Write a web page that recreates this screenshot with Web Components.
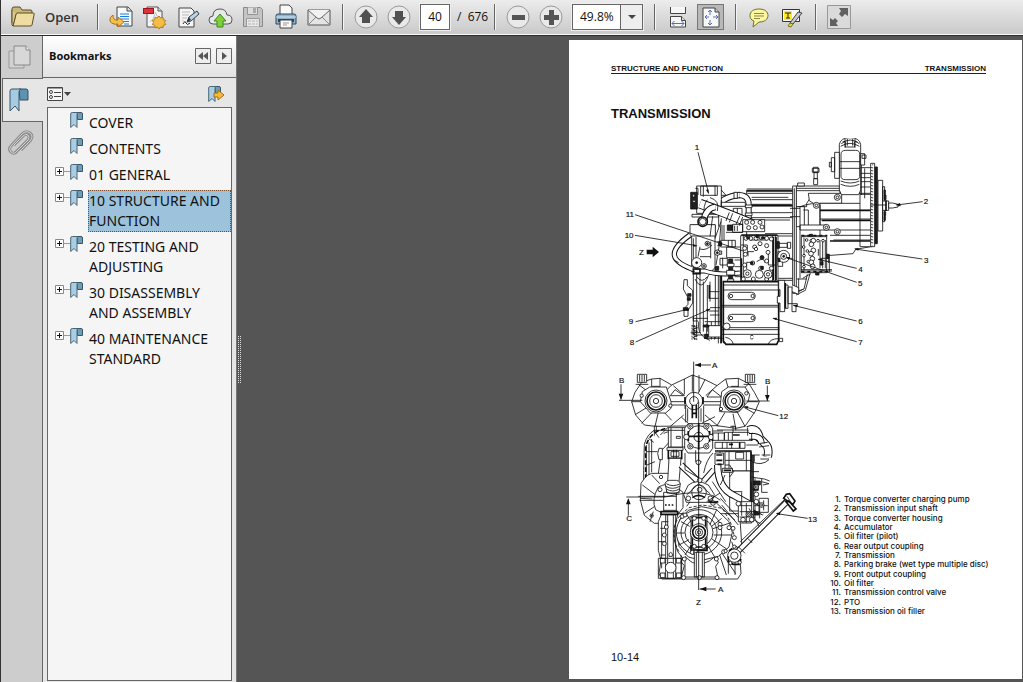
<!DOCTYPE html>
<html lang="en">
<head>
<meta charset="utf-8">
<title>Transmission manual</title>
<style>
html,body{margin:0;height:100%}
body{font-family:"Open Sans","Noto Sans",sans-serif;font-size:12px;color:#111;background:#555;overflow:hidden}
</style>
</head>
<body>
<pdf-reader></pdf-reader>
<script>
const define=(name,html,setup)=>customElements.define(name,class extends HTMLElement{
  connectedCallback(){
    if(this.shadowRoot)return;
    const t=document.createElement('template');
    t.innerHTML=typeof html==='function'?html(this):html;
    this.attachShadow({mode:'open'}).append(t.content.cloneNode(true));
    if(setup)setup(this);
  }
});

const mark=`<path d="M7 .5h4q1.500 0 1.500 1.500v5.500h-5z" fill="#6f9db6" stroke="#3a5666"/><path d="M.7 2Q.7.5 2.200.5H8q-1 .5-1 2v13l-3-3-3.300 3z" fill="#a9cde2" stroke="#4c6675"/>`;
const icons={
folder:`<path d="M1 18V4q0-2 2-2h6l2 3h9q1 0 1 2v3" fill="#c9b877" stroke="#5c4f2a"/><path d="M2 21 5 9q0-1 2-1h15q2 0 1 2l-2 10q0 1-2 1z" fill="#efdca0" stroke="#5c4f2a"/><path d="M1 5v15l1 1 3-12" fill="#dcca8c" stroke="#5c4f2a"/>`,
export:`<path d="M8 2h11l4 4v15H8z" fill="#f5f8fb" stroke="#444"/><path d="M18 2v4h5" fill="#ddd" stroke="#444"/><path d="M11 9h9M11 11.500h9M11 14h9M15 16.500h5M15 19h5" stroke="#1d7be0"/><path d="M4 10q-4 2-3 6 2 4 8 3v3l6-5-6-5v3q-5 1-5-5z" fill="#f6c14a" stroke="#a8741a"/>`,
create:`<path d="M5 2h11l4 4v16H5z" fill="#f4f4f4" stroke="#555"/><path d="M16 2v4h4" fill="#ddd" stroke="#555"/><path d="M13 7q2 6 6 6M13 9q-1 5-5 8" fill="none" stroke="#bbb"/><rect x="1.500" y="3.500" width="10" height="5" fill="#e0303a" stroke="#a3121c"/><path d="m17 11 1.600 2 2.400-.8.200 2.500 2.500.7-1.200 2.100 1.200 2-2.500.8-.2 2.500-2.400-.8-1.600 2-1.600-2-2.400.8-.2-2.500-2.500-.8 1.200-2-1.200-2.100 2.500-.7.200-2.500 2.400.8z" fill="#f4bd45" stroke="#b57d1c"/>`,
sign:`<path d="M4 3h12l3 3v16H4z" fill="#f4f4f4" stroke="#444"/><path d="M7 7h8M7 10h7M7 13h5M7 16h2" stroke="#bbb"/><path d="M8 19q2-4 3-1t4 0" fill="none" stroke="#222"/><path d="m12 17 2-5 8-6 2 3-8 7z" fill="#bcd3e2" stroke="#33434e"/><path d="m12 17 2-5 2 3z" fill="#333"/>`,
cloud:`<path d="M5 19Q1 19 1 15q0-4 4-4 0-7 7-7 6 0 7 6 5 0 5 5 0 4-4 4z" fill="#e9e9e9" stroke="#555"/><path d="m12 9 6 7h-3v6H9v-6H6z" fill="#7fd03c" stroke="#3d8a1c"/>`,
save:`<path d="M2.500 2.500h17l2 2v17h-19z" fill="#c4c4c4" stroke="#8b8b8b"/><path d="M6.500 2.500v7h10v-7" fill="#dcdcdc" stroke="#959595"/><path d="M12 3v5h3V3z" fill="#aaa"/><path d="M5.500 21.500v-8h13v8" fill="#e8e8e8" stroke="#999"/><path d="M7 16h10M7 19h10" stroke="#b5b5b5" stroke-dasharray="3 1"/>`,
print:`<path d="M6 11V0h9l3 3v8" fill="#f8f8f8" stroke="#444"/><path d="M2 19V11q0-2 2-2h16q2 0 2 2v8z" fill="#8db2cd" stroke="#31485a"/><path d="M2 12h20" stroke="#d7e6f0"/><path d="M4 14h16v3H4z" fill="#2c4152"/><path d="M6 15h12v8H6z" fill="#fafafa" stroke="#444"/><path d="M9 18h6M9 20h4" stroke="#999"/>`,
mail:`<path d="M1 5h22v15H1z" fill="#e4e4e4" stroke="#555"/><path d="m1 20 8-8M23 20l-8-8" stroke="#888" fill="none"/><path d="m1 5 9 8q2 2 4 0l9-8" fill="#f1f1f1" stroke="#666"/>`,
up:`<circle cx="12" cy="12" r="11" fill="#e9e9e9" stroke="#999"/><path d="m12 4 7 8h-3v6H8v-6H5z" fill="#505050"/>`,
down:`<circle cx="12" cy="12" r="11" fill="#e9e9e9" stroke="#999"/><path d="m12 20 7-8h-3V6H8v6H5z" fill="#505050"/>`,
minus:`<circle cx="12" cy="12" r="11" fill="#e9e9e9" stroke="#999"/><path d="M6 10h13v5H6z" fill="#555"/>`,
plus:`<circle cx="12" cy="12" r="11" fill="#e9e9e9" stroke="#999"/><path d="M10 5h5v5h5v5h-5v5h-5v-5H5v-5h5z" fill="#555"/>`,
fitwidth:`<path d="M4.500 2v6.500h15V2M4.500 22V11.500h11l4 4V22z" fill="#f6f6f6" stroke="#444"/><path d="M15.500 11.500v4h4" fill="#ddd" stroke="#444"/><path d="M6 18.500h12M8.500 16l-2.500 2.500L8.500 21M15.500 16l2.500 2.500-2.500 2.500" fill="none" stroke="#5570b8"/>`,
fitpage:`<path d="M4 3h12l4 4v15H4z" fill="#f8f8f8" stroke="#444"/><path d="M16 3v4h4" fill="#ccc" stroke="#444"/><path d="M11 5v5M11 15v5M9 7l2-2 2 2M9 18l2 2 2-2M6 12h4M14 12h5M8 10l-2 2 2 2M17 10l2 2-2 2" fill="none" stroke="#5570b8"/>`,
note:`<path d="M12 4c6 0 9 3 9 6.500S18 17 12 17l-6 5 1-6c-3-1-4-3-4-5.500C3 7 6 4 12 4z" fill="#fbf6a0" stroke="#77702c"/><path d="M7 8.500h10M7 11h10M7 13.500h6" stroke="#8d8746"/>`,
highlight:`<path d="M2.500 4.500h17v12h-17z" fill="#f8f8f8" stroke="#333"/><path d="M4 6h8v9H4z" fill="#ffe92e"/><path d="M5 8h6M8 8v5M6 13h4" stroke="#222"/><path d="m10 18 8-11 4 1-9 11z" fill="#c6c8cb" stroke="#444"/><path d="m8 21 2-3 3 1-2 3z" fill="#e6df3c" stroke="#777020"/>`,
expand:`<path d="M.5.500h23v23H.5z" fill="#dadada" stroke="#999"/><path d="M21 3v8l-3-2-3 3-3-3 2-3-2-3zM3 21v-8l3 2 2-2 3 3-2 2 2 3z" fill="#606060"/>`,
pages:`<path d="M1 6h15v17H1z" fill="#d2d2d2" stroke="#999"/><path d="M6 1h12l4 4v15H6z" fill="#d8d8d8" stroke="#888"/><path d="M18 1v4h4" fill="#eee" stroke="#888"/>`,
bigmark:`<path d="M12 1h7q2 0 2 2v9h-8z" fill="#5d93b0" stroke="#35515f"/><path d="M3 3q0-2 2-2h9q-2 1-2 3v19l-4-5-5 5z" fill="#a5cbe2" stroke="#3d5563"/>`,
clip:`<path d="M6 14 15 5q3-3 5-1t0 5L9 20q-3 4-6 1t0-6L14 3q4-4 8-1t0 8l-9 9" fill="none" stroke="#8c8c8c" stroke-width="3"/><path d="M6 14 15 5q3-3 5-1t0 5L9 20q-3 4-6 1t0-6L14 3q4-4 8-1t0 8l-9 9" fill="none" stroke="#d4d4d4"/>`
};

define('reader-icon',el=>`<style>:host{display:block;width:24px;height:24px}svg{display:block;overflow:visible}</style>
<svg width="24" height="24" viewBox="0 0 24 24" aria-hidden="true">${icons[el.getAttribute('name')]}</svg>`);

define('tool-button',el=>`<style>
:host{display:block}
button{display:flex;align-items:center;justify-content:center;gap:10px;min-width:24px;height:26px;padding:0;border:0;background:none;font:600 13px "Open Sans",sans-serif;color:#333}
:host([pressed]) button{width:27px;border:1px solid #777;background:#b8b8b8}
</style><button type="button" aria-label="${el.getAttribute('label')}"><reader-icon name="${el.getAttribute('icon')}"></reader-icon><slot></slot></button>`);

define('tool-divider',`<style>:host{display:block;width:1px;height:26px;margin:0 10px 0 11px;background:#666;border-right:1px solid #f4f4f4}</style>`);
define('tool-group',`<style>:host{display:flex;align-items:center;gap:9px}:host([tight]){gap:7px}</style><slot></slot>`);

define('page-field',`<style>
:host{display:flex;align-items:center;gap:7px;font-size:12px}
input{box-sizing:border-box;width:30px;height:26px;border:1px solid #666;padding:0;text-align:center;font:inherit;color:#111;background:#fff;outline:1px solid #eee}
label{white-space:pre;width:26px}
</style><input id="p" value="40"><label for="p">/  676</label>`);

define('zoom-field',`<style>
:host{display:grid;grid-template-columns:1fr 22px;width:71px;height:26px;box-sizing:border-box;border:1px solid #666;background:#fff;outline:1px solid #eee}
select{grid-area:1/1/2/3;appearance:none;border:0;background:none;padding:0 0 0 7px;font:12px "Open Sans",sans-serif;color:#111}
span{grid-area:1/2;display:grid;place-items:center;border-left:1px solid #666;background:#eee;pointer-events:none}
</style><select aria-label="Zoom"><option>49.8%</option></select><span><svg width="8" height="4" viewBox="0 0 8 4"><path d="M0 0h8L4 4z" fill="#444"/></svg></span>`);

define('reader-toolbar',`<style>
:host{display:flex;align-items:center;height:33px;padding:0 0 1px 10px;background:linear-gradient(#ececec,#c9c9c9);border-bottom:1px solid #fafafa;box-shadow:0 1px #2b2b2b;margin-bottom:1px;position:relative}
.open{min-width:75px}
.open tool-button{width:67px}
</style>
<div class="open"><tool-button icon="folder" label="Open">Open</tool-button></div>
<tool-divider></tool-divider>
<tool-group>
<tool-button icon="export" label="Export"></tool-button><tool-button icon="create" label="Create PDF"></tool-button><tool-button icon="sign" label="Sign"></tool-button><tool-button icon="cloud" label="Upload"></tool-button><tool-button icon="save" label="Save"></tool-button><tool-button icon="print" label="Print"></tool-button><tool-button icon="mail" label="Mail"></tool-button>
</tool-group>
<tool-divider></tool-divider>
<tool-group><tool-button icon="up" label="Previous page"></tool-button><tool-button icon="down" label="Next page"></tool-button><page-field></page-field></tool-group>
<tool-divider></tool-divider>
<tool-group><tool-button icon="minus" label="Zoom out"></tool-button><tool-button icon="plus" label="Zoom in"></tool-button><zoom-field></zoom-field></tool-group>
<tool-divider></tool-divider>
<tool-group tight><tool-button icon="fitwidth" label="Fit width"></tool-button><tool-button icon="fitpage" label="Fit page" pressed></tool-button></tool-group>
<tool-divider></tool-divider>
<tool-group><tool-button icon="note" label="Comment"></tool-button><tool-button icon="highlight" label="Highlight"></tool-button></tool-group>
<tool-divider></tool-divider>
<tool-button icon="expand" label="Full screen"></tool-button>`);

define('side-rail',`<style>
:host{display:flex;flex-direction:column;width:42px;background:#cdcdcd;box-shadow:inset -1px 0 #666}
button{height:42px;padding:0 0 0 7px;border:0;background:none;display:flex;align-items:center}
.on{height:44px;margin-left:1px;padding-left:4px;background:#e6e6e6;border:1px solid #666;border-right:0}
</style>
<button type="button" aria-label="Pages"><reader-icon name="pages"></reader-icon></button>
<button type="button" class="on" aria-label="Bookmarks"><reader-icon name="bigmark"></reader-icon></button>
<button type="button" aria-label="Attachments"><reader-icon name="clip"></reader-icon></button>`);

define('bookmark-item',el=>`<style>
:host{display:grid;grid-template-columns:9px 6px 12px 1fr;align-items:start}
button{width:9px;height:9px;margin-top:3px;padding:0;border:0;background:none}
i{height:1px;margin-top:7px;background:#999}
svg{display:block}
a{margin-left:6px;border:1px solid transparent;font:14px/20px "Noto Sans",sans-serif;color:#111;text-decoration:none}
:host([selected]) a{background:#9cc2dc;border:1px dotted #7a4a2a}
</style>
${el.hasAttribute('leaf')?'<span></span><span></span>':`<button type="button" aria-label="Expand"><svg width="9" height="9" viewBox="0 0 9 9"><path d="M.5.5h8v8h-8z" fill="#fff" stroke="#888"/><path d="M2 4.500h5M4.500 2v5" stroke="#111"/></svg></button><i></i>`}
<svg width="13" height="16" viewBox="0 0 13 16">${mark}</svg>
<a href="#"><slot></slot></a>`);

define('bookmark-panel',`<style>
:host{display:flex;flex-direction:column;background:#e6e6e6;border-right:1px solid #777;min-width:0}
header{display:flex;align-items:center;gap:5px;height:42px;box-sizing:border-box;padding:0 4px 2px 6px;background:linear-gradient(#fff,#e2e2e2);border-bottom:1px solid #666}
h2{flex:1;margin:0;font-size:11px;line-height:16px;font-weight:700}
button{display:block;padding:0;border:0;background:none}
header svg{display:block}
.tools{display:flex;justify-content:space-between;height:29px;box-sizing:border-box;align-items:center;padding:2px 11px 0 4px}
.tools svg{display:block}
.tree{flex:1;display:flex;flex-direction:column;gap:4px;margin:0 4px 1px;border:1px solid #666;background:#f5f5f5;padding:4px 0 0 7px}
</style>
<header><h2>Bookmarks</h2>
<button type="button" aria-label="Collapse"><svg width="16" height="16" viewBox="0 0 16 16"><path d="M.5.500h15v15H.5z" fill="#eee" stroke="#666"/><path d="M8 4v8L3 8zM13 4v8L8 8z" fill="#555"/></svg></button>
<button type="button" aria-label="Dock"><svg width="16" height="16" viewBox="0 0 16 16"><path d="M.5.500h15v15H.5z" fill="#eee" stroke="#666"/><path d="m6 4 5 4-5 4z" fill="#555"/></svg></button>
</header>
<div class="tools">
<button type="button" aria-label="Options"><svg width="24" height="16" viewBox="0 0 24 16"><path d="M.5 1.500h15v13H.5z" fill="#f6f6f6" stroke="#444"/><path d="M1 2h14" stroke="#444"/><circle cx="4" cy="6" r="1.500" fill="none" stroke="#444"/><circle cx="4" cy="11" r="1.500" fill="none" stroke="#444"/><path d="M7 6.500h7M7 10.500h7" stroke="#444"/><path d="M17 6h7l-3.500 4z" fill="#444"/></svg></button>
<button type="button" aria-label="New bookmark"><svg width="17" height="16" viewBox="0 0 17 16">${mark}<path d="M6 7h4V4l6 5-6 5v-3H6z" fill="#f6b93b" stroke="#a56f15"/></svg></button>
</div>
<div class="tree">
<bookmark-item leaf>COVER</bookmark-item>
<bookmark-item leaf>CONTENTS</bookmark-item>
<bookmark-item>01 GENERAL</bookmark-item>
<bookmark-item selected>10 STRUCTURE AND FUNCTION</bookmark-item>
<bookmark-item>20 TESTING AND ADJUSTING</bookmark-item>
<bookmark-item>30 DISASSEMBLY AND ASSEMBLY</bookmark-item>
<bookmark-item>40 MAINTENANCE STANDARD</bookmark-item>
</div>`);

define('panel-grip',`<style>:host{display:grid;align-content:center;width:6px}
div{height:48px;width:4px;margin-left:1px;background:repeating-linear-gradient(#555 0 1px,transparent 1px 2px),repeating-linear-gradient(90deg,#ddd 0 1px,#555 1px 2px)}</style><div></div>`);

const bolts=(list,r)=>list.split(' ').map(p=>{const [x,y]=p.split(',');return `<circle cx="${x}" cy="${y}" r="${r}"/>`}).join('');
const hose=(d,w)=>`<path d="${d}" fill="none" stroke-width="${w}"/><path d="${d}" fill="none" stroke="#fff" stroke-width="${w-6}"/>`;
const svgStyle=`<style>:host{display:block}svg{display:block;width:100%;height:auto}
.d{fill:#fff;stroke:#111;stroke-width:2.500}.n{fill:none}.k{fill:#222}.h{stroke-width:5}.l{stroke-width:2.500}.m{fill:#111;stroke:none}
text{font:24px "Liberation Sans",Arial,sans-serif;fill:#111;stroke:#111;stroke-width:.5}</style>`;

define('side-view',svgStyle+`<svg viewBox="33 39 1125 636" role="img" aria-label="Transmission side view"><g class="d">
<path d="M440 196h140v270H440z"/>
<path class="n" d="M440 192h140M442 205h138M455 217h110M455 224h125M455 238h120M455 243h125M455 263h125M480 285h90M440 278h140M495 326h84M500 333h79M535 400h44M535 460h44"/>
<path class="h n" d="M440 198h138M455 241h123"/>
<path d="M588 183h132v30h-85l-15 22v10h-32z"/><path class="n" d="M588 190h131M588 197h131"/>
<path d="M625 205h100v30H640l-12-8z"/>
<path d="M660 235h152v130l-45 8-8 13-80 6-19-62z"/><path d="M780 128h36v237h-36z"/>
<path class="n" d="M660 256h152M660 282h152M680 315h132M690 331h122M700 345h112M780 145h32M780 158h32M780 170h32M780 186h32M780 208h32M720 205h92M784 100v110M794 130v90"/>
<path class="h n" d="M660 256h152M665 286h147M690 348h122"/>
<path d="M588 245h25v60h-25z"/><path d="M600 300h80l10 7-10 8h-80z"/><path class="n" d="M600 245q40-15 60-5v60M610 255h15v45"/>
<path d="M718 195V58q4-20 32-20t32 20v137l-6 14h-52z"/><path d="M723 88q0-12 14-12h30q12 0 12 12v66q0 10-14 10h-28q-14 0-14-10z"/>
<path class="n" d="M720 110h60M720 130h60M724 56q26-22 54 0M722 64q28-18 56 0M728 50h8v16h28V50h8M722 168q30 12 56 0M722 178q30 12 56 0M735 42v26M742 42v20M758 42v20M765 42v26"/>
<path d="M704 82h14v78h-14zM694 98h10v42h-10zM688 112h6v14h-6zM782 86h12v34h-12zM786 90h12v10h-12z"/>
<path d="M640 127h14v14h-14zM637 130h20v12h-20zM642 143h10v18h-10zM641 161h12v18h-12zM593 174h20v9h-20z"/>
<path d="M812 115h12v250h-12z"/><path class="k" d="M825 126h7v230h-7z"/><path class="n" stroke-dasharray="3 6" d="M818 118v244M815 126v234"/>
<path d="M834 166h14v152h-14zM848 185h6v105h-6z"/><path class="k" d="M852 195h4v14h-4zM852 210h6v14h-6zM852 260h5v12h-5zM852 274h4v12h-4z"/><path d="M848 228h18v28h-18z"/><path d="M866 234h12l16 4v8l-16 3h-12z"/><path class="h n" d="M858 226v32"/>
<path class="l n" d="M812 240h48M894 242h8"/>
<path d="M578 183h11v322h-11z"/><path class="n" d="M583 190v310M600 245v215M570 250h30M570 275h30M590 462h30M608 460l24-14"/>
<path d="M604 335h76v108h-76z"/><path class="n" d="M604 332h76M604 438h92M612 338v98M660 345v85M668 345v85M676 345v85M604 434h92M680 385l8 15v42" />
<path class="h n" stroke-dasharray="9 9" d="M604 332h78M604 440h80"/>
${bolts('620,345 634,347 654,347 669,347 611,366 612,392 625,410 612,425 622,378',4)}
${bolts('640,347 634,358 640,376 633,386 637,401 634,412 638,424',7)}
${bolts('712,217 649,241 679,307 712,320',9)}${bolts('712,217 649,241 679,307 712,320',4)}
<path class="n" d="M588 510l28-14 14-50M590 500l22-8 10-44M596 460v40l14-8M655 392v-20M660 400h26v14"/>
<path class="k" d="M628 328h10v6h-10zM680 388h8v12h-8zM647 442h10v8h-10zM661 410h8v10h-8z"/>
${hose('M345 258Q362 214 420 210',20)}${hose('M418 210Q446 212 446 238V282',18)}
<path class="d" d="M402 202h10v18h-10zM436 240h20v8h-20zM436 264h20v8h-20z"/>
<path d="M290 183h74v82h-74zM302 183h50v28h-50z"/><path class="n" d="M310 183v32M345 183v30M364 195l14 16h-14M286 190h8v20"/>
<path class="k" d="M272 202h20v50h-20z"/><path fill="#fff" d="M278 208h6v8h-6zM278 226h8v6h-8z"/>
<path d="M276 268h80v8h-80zM364 232h72v12h-72zM400 250h26v22h-26z"/><path class="n" d="M412 250v22M364 225v40M356 265v40"/>
${hose('M300 236Q400 272 468 302',30)}
<path class="n" d="M388 262l-10 26M398 265l-10 27M420 272l-12 26M428 276l-10 26M322 224q-14 20-8 40M330 218q30 8 22 40"/>
${hose('M346 246Q318 250 312 284',20)}
<path d="M428 284h66v36h-66z"/>${bolts('440,292 458,292 480,292 486,306 466,308 446,308',6)}
<path class="k" d="M382 300h16v16h-16z"/><path class="n" d="M398 298h30v24h-30zM404 302v16M412 302v16M378 322h50"/>
<path d="M275 300h70v140h-70z"/><path d="M270 299h76v34h-76z"/><circle class="h" cx="308" cy="290" r="14"/><circle cx="308" cy="290" r="10"/>
${hose('M270 330C200 380 210 410 288 436',16)}
<path class="n" d="M300 372q18 6 36-12M300 395h32M300 365l-6 30M332 350v50M345 340l18-50M348 420l10-60 6-80M330 334l8-60M280 340v90M222 405l14 8M288 336v80"/>
<circle cx="322" cy="356" r="7"/><circle class="k" cx="322" cy="356" r="3"/><circle cx="290" cy="413" r="15"/><circle class="k" cx="290" cy="413" r="3"/>
<circle cx="312" cy="423" r="7"/><circle cx="312" cy="423" r="3"/>
<path d="M280 440h80v190h-80z"/><path class="n" d="M290 440v185M300 440v180M310 470v150M322 480v140M330 470v60M346 440v200M355 440v215M362 440v215M285 462q20 40 40-10l20-25M290 455q15 22 32 0M330 500h28M326 520h30M330 548h30M326 558h30M330 570h28"/>
<path class="h n" d="M364 440v215M372 470v185M328 480v40"/>
${hose('M284 438h30q40 14 106 6',15)}<path class="h n" d="M280 432h20v14h-20z"/>
<path d="M362 346h44v20h-44zM380 366h42v32h-42zM345 378h20v10h-20zM360 400h22v20h-22z"/><path class="n" d="M366 300v46M372 300v46M385 346v20M396 346v20M368 398v32M352 350h12v12h-12"/>
<circle cx="352" cy="383" r="8"/><circle class="k" cx="352" cy="383" r="3"/><path class="k" d="M356 353h9v8h-9zM346 424h10v12h-10z"/>
<path class="k" d="M386 402h12v90h-12z"/><path d="M382 415h20v10h-20zM380 436h24v14h-24zM383 462h18v12h-18zM389 490h5v14h-5z"/><path class="n" d="M404 425h18M404 455h18M404 470h18M404 405h18"/>
<path d="M422 332h112v136h-112z"/><path d="M424 468h50v22h-50z"/><path class="n" d="M430 332v136M518 332v136M526 332v136M422 360h20v30M450 345h50M505 380v40h20M470 410q22-16 26 4M440 432v-20h16M462 380h-18v14"/>
<path class="h n" d="M424 330h108M520 336v130M528 336v130M424 400v60"/>
${bolts('438,340 452,340 468,340 484,338 500,340 514,342 434,370 464,366 480,356 500,362 504,382 436,388 434,420 458,414 486,398 482,430 460,462 436,486 464,486 500,462 514,430 500,408 430,462 510,450',6)}
${bolts('442,446 504,448 478,448',12)}${bolts('442,446 504,448 468,372',5)}
<path class="k" d="M440 335h9v6h-9zM468 330h8v8h-8zM484 336h10v5h-10zM482 393h8v8h-8zM482 424h8v9h-8zM452 411h7v7h-7z"/>
<path d="M534 355h28v12h-28zM562 352h10v18h-10zM534 380h14v44h-14z"/><circle cx="551" cy="394" r="18"/><circle cx="551" cy="394" r="9"/><circle class="k" cx="551" cy="394" r="3"/><path class="k" d="M530 350h8v20h-8zM534 400h6v10h-6z"/>
<path class="h" d="M370 470h166v176l-6 12H378l-8-10z"/><path class="n" d="M366 608h172M366 614h172M366 628h172M366 541h170M366 546h170M370 480h165M376 600q-8 12-6 20M400 657q-6-18-24-20M505 657q6-16 30-16M372 495h164"/>
<rect x="384" y="502" width="82" height="22" rx="11"/><rect x="384" y="568" width="82" height="22" rx="11"/>${bolts('393,513 458,513 393,579 458,579',5)}
<path d="M536 466h18v94h-14v-26h-8v-20h8v-20h-4zM556 480h8v70h-8zM564 486h12v50h-12zM576 536h16v8h-4v16h-12zM576 500l20 8v-20l-18-8M538 640h10v10h-10z"/><path class="h n" d="M556 474v76"/>
<path d="M252 464h10v18l16 14v38l-14 22v18h-12v-22l12-14v-20l-14-26z"/><path class="k" d="M263 506h10v8h-10zM262 518h9v8h-9zM250 548h14v8h-14z"/>
<path class="n" d="M296 590v16q0 20 20 34l14 6M314 590h52M314 604h54M312 640h56M278 580h46M280 576v12h14M320 596v46M334 590v54M344 600v44"/>
<path d="M326 602h36v34h-36z"/><circle cx="380" cy="604" r="10"/><path class="k" d="M310 600h16v6h-16zM314 628h10v12h-10z"/><path class="n" d="M276 602l16 6-14 6 14 6-14 6 14 6-14 6 14 6M272 623h30"/>
<path class="n" stroke-dasharray="5 3" d="M276 600v44M284 600v46M290 600v42"/>
<path class="n" d="M450 634q8-8 10 0M450 638q6 8 10 2"/>
<g class="l n"><path d="M294 82 326 205M105 269 430 378M105 331 290 362M107 590 255 555M107 651 330 552M968 230 890 240M967 402 765 372M770 430 655 403M770 472 560 398M770 588 580 541M770 650 520 580"/></g>
<path class="m" d="M326 207l-8-12 7-2zM292 363l-13-6 1 8zM253 556l13-7 1 8zM332 551l-14 2 4 7zM886 240l14-6 1 8zM762 371l14-2-1 8zM653 402l14-1-2 8zM557 396l13 0-3 8zM578 540l14-1-2 8zM517 579l14-1-2 8zM140 374h18v-9l19 16-19 16v-9h-18z"/>
</g>
<text x="284" y="76">1</text><text x="77" y="276">11</text><text x="74" y="339">10</text><text x="117" y="389">Z</text><text x="86" y="598">9</text><text x="89" y="661">8</text><text x="971" y="238">2</text><text x="972" y="413">3</text><text x="775" y="440">4</text><text x="774" y="484">5</text><text x="775" y="597">6</text><text x="775" y="660">7</text>
</svg>`);

define('front-view',svgStyle+`<svg viewBox="18 15 648 744" role="img" aria-label="Transmission front view"><g class="d">
<path d="M80 140 90 112 110 82 140 72 165 70 200 90 238 72 262 60 300 74 336 92 362 72 400 70 432 86 448 112 463 140 450 170 420 214 392 220 336 212 150 214 118 210 92 180z"/>
<path class="n" d="M80 140h380M100 88l34 26M140 72v30M165 70v30M110 205l34-36M92 178l36-22M200 90l-30 30M238 72v46M262 60v50M282 60v50M300 74l-20 40M205 92l34 30M336 92l-34 30M362 72l10 34M400 70v30M432 86l-34 30M420 214l-24-44M392 220l-8-44M448 175l-38-22M150 214l10-42M200 196l-28-30M336 212l24-40M236 180l-40 34M300 180l40 34M190 150h50v12M296 150h50v12M210 104l26 18h-40zM322 104l28 22h-44z"/>
<path d="M97 58h28v24H97zM421 58h28v24h-28zM143 94h20v12h-20zM379 94h20v12h-20z"/><path class="n" d="M104 60v20M111 60v20M118 60v20M428 60v20M435 60v20M442 60v20M92 88h38M416 88h38"/>
<path d="M112 110l22-14h50l14 44v20l-16 14h-46l-30-34zM344 170l6-60 20-14h50l14 22-4 20-30 34z"/>
${bolts('153,138 387,138',33)}<g class="h">${bolts('153,138 387,138',27)}</g>${bolts('153,138 387,138',19)}${bolts('153,138 387,138',8)}
${bolts('110,122 196,152 424,115 348,162 244,138 290,138',5)}
<circle cx="267" cy="138" r="26"/><circle cx="267" cy="138" r="13"/><path class="h n" d="M240 126v22M294 126v22M262 150v40M274 150v40M262 175h14"/>
<path class="n" d="M242 150v52M296 152v50M248 160v40M288 160v40M250 205l-20-18M290 205l40-20"/>
<path d="M118 268q8-30 30-42h50v30l-28 30-10 70-6 30-38 20v-60z"/>
<path class="n" d="M148 212v30M154 212v16M130 250l16 12M124 290h34M126 330l24-10M146 226l16 22M190 216l-24 24M124 270v100M132 262v100M140 252v100M176 236q12-10 24 0"/>
<path class="h n" stroke-dasharray="14 7" d="M122 372v-92q4-34 36-52l30-10"/>
<path d="M150 355q-22-4-42 30l-2 50 12 46 30 24h60v-150z"/><path class="n" d="M112 390l40 30M106 430l36 2M118 475l36-24M140 360l24 26M135 500l10-30"/>
<path d="M190 218h52v58h-52zM162 280q-8 14 0 34h10v-34z"/><path class="n" d="M190 226h52M198 218v58M232 218v58M214 244h12v6h-12z"/>
<path d="M239 220l10-14h64l10 14v60l-10 14h-64l-10-14z"/><circle cx="281" cy="246" r="34"/><path class="h n" d="M242 244h80M281 204v80M250 228v30M314 228v32M322 236v22"/><circle cx="281" cy="246" r="14" class="n"/>
${bolts('256,214 304,214 256,274 304,274 244,246 318,246',8)}${bolts('256,214 304,214 256,274 304,274',3)}
<path d="M324 234h34v22h-34zM358 232h84v24h-84zM330 262h90v18h-90z"/><path class="n" d="M340 234v22M370 232v24M382 232v24M352 262v18M366 262v18M380 262v18M336 225h100M324 228h30M384 212v20M376 214h16v12"/>
${hose('M430 226q26-12 34 24l16 16q14 10 8 40',26)}${hose('M432 244h16q20 2 22 22',20)}
<path class="n" d="M428 218v24M440 234v24M458 266l30-4M462 276l30-4M470 300h26M466 312h26M440 300v20M448 300v20M440 320q30 14 52-6M424 300h40M424 270h36"/>
<path class="h n" d="M384 240h20M372 268h12M404 262v18M330 288h110"/>
<path d="M360 290h78v58h-78zM392 292h24v20h-24z"/><path class="n" d="M372 290v58M360 316h78M424 290v58M345 290v50"/>
<path d="M374 348h62v120h-62z"/><path class="h n" d="M438 290v180M444 300v160"/><path class="k" d="M446 378h20v12h-20zM444 400h16v6h-16zM440 440h18v8h-18zM442 470h20v10h-20z"/>
<path d="M190 284h40v26h-40z" class="h"/><path d="M186 278h48v8h-48zM192 310h36l-6 70h-34z"/><path class="n" d="M198 290h24v14h-24zM206 284v26M214 284v26"/>
${hose('M228 330l36 34 20 20',20)}${hose('M296 378l30-34',18)}${hose('M338 330q0 70 50 92l90 50',22)}
<path d="M330 294h26v34h-26zM352 340h30v12h-30z"/><path class="h n" d="M334 300h18M334 316h18M338 328h12M356 346h22"/>
<path class="n" d="M360 330h14l12 20-12 16M360 360l-14 30M281 290v80M290 320h-18v-34M324 294q-20 20-28 60M240 294v50l40 24"/>
<path d="M160 396q26-12 44-8l30 24v46l-12 16h-50l-20-10q-14-30 8-68z"/><path d="M176 412h38v66h-38z"/><path class="n" d="M176 424h38M100 424h80M104 436h70M176 466h38"/><path class="h n" stroke-dasharray="5 5" d="M180 450h30"/>
<path d="M180 384q6-8 14-8h20q10 0 12 10l-4 28h-36z"/><path class="n" d="M184 386q20 12 42 0M182 394q20 12 42 0M184 402q20 12 38 0M184 410q20 12 38 0"/>
<circle cx="140" cy="482" r="5"/><circle cx="168" cy="366" r="5"/><circle cx="165" cy="404" r="6"/><circle class="k" cx="140" cy="482" r="2"/>
<path d="M160 500l10-24h230l6 30 4 60-6 30 4 60-10 16H170l-8-16 6-40-8-30z"/>
<path class="h" d="M168 470h50v8h-50z"/>
<path d="M182 480h30v190h-30z"/><path class="n" d="M188 480v190M205 480v190M190 500h-20v140M218 480q-20 60 0 110l16 20M160 560h22M166 520h16M166 600h14M228 600v70"/>
<circle cx="197" cy="638" r="16"/><path d="M166 610h14v14h-14zM166 654h14v14h-14zM214 610h14v14h-14zM214 654h14v14h-14zM192 596q5-8 10 0v8h-10z"/>
<path class="n" d="M160 610h70v60h-70z"/>
<path d="M215 530 225 492 250 466 290 455 335 464 372 500 382 532 372 576 340 604 290 616 250 606 222 574z"/>
<circle cx="282" cy="532" r="68"/><circle cx="282" cy="532" r="54" class="n"/><circle cx="282" cy="532" r="42" class="n"/>
<path class="n" d="M228 500l26 14M215 534h24M222 570l30-16M245 478l18 30M335 464l-20 44M372 505l-48 16M380 540h-54M365 582l-44-30M330 608l-20-34M240 600l20-32M350 490l-30 24"/>
<path d="M258 486q24-8 48 0v92q-24 12-48 0z"/><path class="h n" d="M260 488h44v-6M260 576h44M258 570v16h48v-16M262 494v80M302 494v80"/>
<circle cx="282" cy="532" r="26"/><circle class="h" cx="282" cy="532" r="19"/><circle cx="282" cy="532" r="11"/><circle cx="282" cy="532" r="5"/>
${bolts('268,490 296,490 268,574 296,574 232,484 345,508 262,592 356,590 240,480 345,518 272,592',6)}
<path d="M268 592h30v74h-30z"/><path class="n" d="M274 592v74M292 592v74M240 604q20 20 28 20M298 624q16-4 28-16M240 612v50M236 606l-8 14 10 12-8 30M330 606l10 16-8 12 6 30M344 600l20 60M352 596l40 60M380 560l20 60M240 666h92M370 620v36M390 600v60"/>
<path class="n" stroke-dasharray="10 5" d="M222 590q-34-60 4-110l26-22 40-8 60 10 24 40 14 50"/>
${bolts('236,668 283,668 336,668 238,612 334,612 384,520 388,548 392,580 178,540 178,566 184,516 250,428 314,426 372,518',6)}
<path d="M250 390q26-20 60 0l18 28-8 24h-76l-8-24z"/><circle cx="282" cy="412" r="22" class="n"/>${bolts('280,322 284,376 250,430 316,430 324,444 284,404',7)}
<path class="h n" d="M262 428q18-14 38 0M310 440q16 4 30 0"/>
<path class="n" d="M245 420l36-34 34 30M255 440l-10 14M305 440l40-26M330 440l60 56M346 430l60 64M350 450l50 60M322 380l40 60"/>
<path d="M400 440h46v60h-46zM462 430h28v42h-28z"/><path class="n" d="M404 452h36M404 470h60M404 486h40M406 504h34M424 444v60M440 380v124M450 370v120M464 440v50M476 436v30M448 452h40"/>
${bolts('400,446 454,396 454,440 430,478 414,494 440,494 470,450 454,418',7)}${bolts('454,396 430,478 470,450',3)}
<path class="n" d="M438 350h24M438 366l40 6 16 6M470 380l22 6-18 4M470 372v40h18M410 412v70M386 410h26M446 494l20 12M432 460l34 60"/>
${hose('M386 602 556 430',18)}<path class="n" d="M406 560 540 432M400 575l20 20M428 550l14 14"/>
<path class="h" d="M543 440l8-2 22 24-8 6zM536 430l8-12 10-2 16 22-6 10z"/><path class="n" d="M546 424l20 30"/>
<circle cx="388" cy="602" r="20"/><circle cx="388" cy="602" r="11"/><path class="h n" d="M370 604v16l14 8h18l6-16M372 588l10-8"/>${bolts('388,575 362,588 376,624 404,622',5)}
<path class="l n" d="M266 20v120M270 30h48M48 88v46M42 136h70M487 92v46M424 138h70M64 426h116M70 432v50M281 140v565M284 702h48M420 156 520 182M516 476 608 490M180 426q120-30 166 10"/>
<path class="m" d="M270 30l18-7v14zM48 134l-7-18h14zM487 138l-7-18h14zM70 430l-7 18h14zM284 702l20-7v14zM416 154l14 0-3 8zM512 475l14-3-1 9z"/>
</g>
<text x="321" y="38">A</text><text x="42" y="83">B</text><text x="480" y="86">B</text><text x="523" y="191">12</text><text x="64" y="499">C</text><text x="609" y="501">13</text><text x="339" y="710">A</text><text x="273" y="749">Z</text>
</svg>`);

const parts=['Torque converter charging pump','Transmission input shaft','Torque converter housing','Accumulator','Oil filter (pilot)','Rear output coupling','Transmission','Parking brake (wet type multiple disc)','Front output coupling','Oil filter','Transmission control valve','PTO','Transmission oil filler'];
define('part-legend',`<style>
:host{display:block;min-width:0}
ol{list-style:none;margin:0;padding:0;height:100%;display:flex;flex-direction:column;justify-content:space-between;font:500 8px/9px Inter,sans-serif;color:#111}
li{display:grid;grid-template-columns:14px 1fr;gap:3px;white-space:nowrap}
span{text-align:right}
</style><ol>${parts.map((p,i)=>`<li><span>${i+1}.</span><div>${p}</div></li>`).join('')}</ol>`);

define('manual-page',`<style>
:host{display:flex;flex-direction:column;box-sizing:border-box;height:100%;aspect-ratio:453/639;padding:24px 36px 16px 42px;background:#fff;font-family:"Liberation Sans",Arial,sans-serif;color:#111}
header{display:flex;justify-content:space-between;font-size:8px;line-height:9px;font-weight:700;border-bottom:1px solid #222}
h1{margin:32px 0 16px;font-size:13px;line-height:16px}
.lower{display:grid;grid-template-columns:minmax(0,216fr) minmax(0,159fr);margin-top:10px}
part-legend{height:121px;margin-top:135px}
footer{margin-top:auto;font-size:11px;line-height:12px}
</style>
<header><span>STRUCTURE AND FUNCTION</span><span>TRANSMISSION</span></header>
<h1>TRANSMISSION</h1>
<side-view></side-view>
<div class="lower"><front-view></front-view><part-legend></part-legend></div>
<footer>10-14</footer>`);

define('pdf-reader',`<style>
:host{display:flex;flex-direction:column;height:100vh;box-sizing:border-box;border-left:1px solid #333}
.body{flex:1;min-height:0;display:grid;grid-template-columns:42px 194px 6px 1fr}
main{min-height:0;display:flex;justify-content:flex-end;box-sizing:border-box;height:100%;padding:4px 1px 3px 0}
</style>
<reader-toolbar></reader-toolbar>
<div class="body"><side-rail></side-rail><bookmark-panel></bookmark-panel><panel-grip></panel-grip><main><manual-page></manual-page></main></div>`);
</script>
</body>
</html>
